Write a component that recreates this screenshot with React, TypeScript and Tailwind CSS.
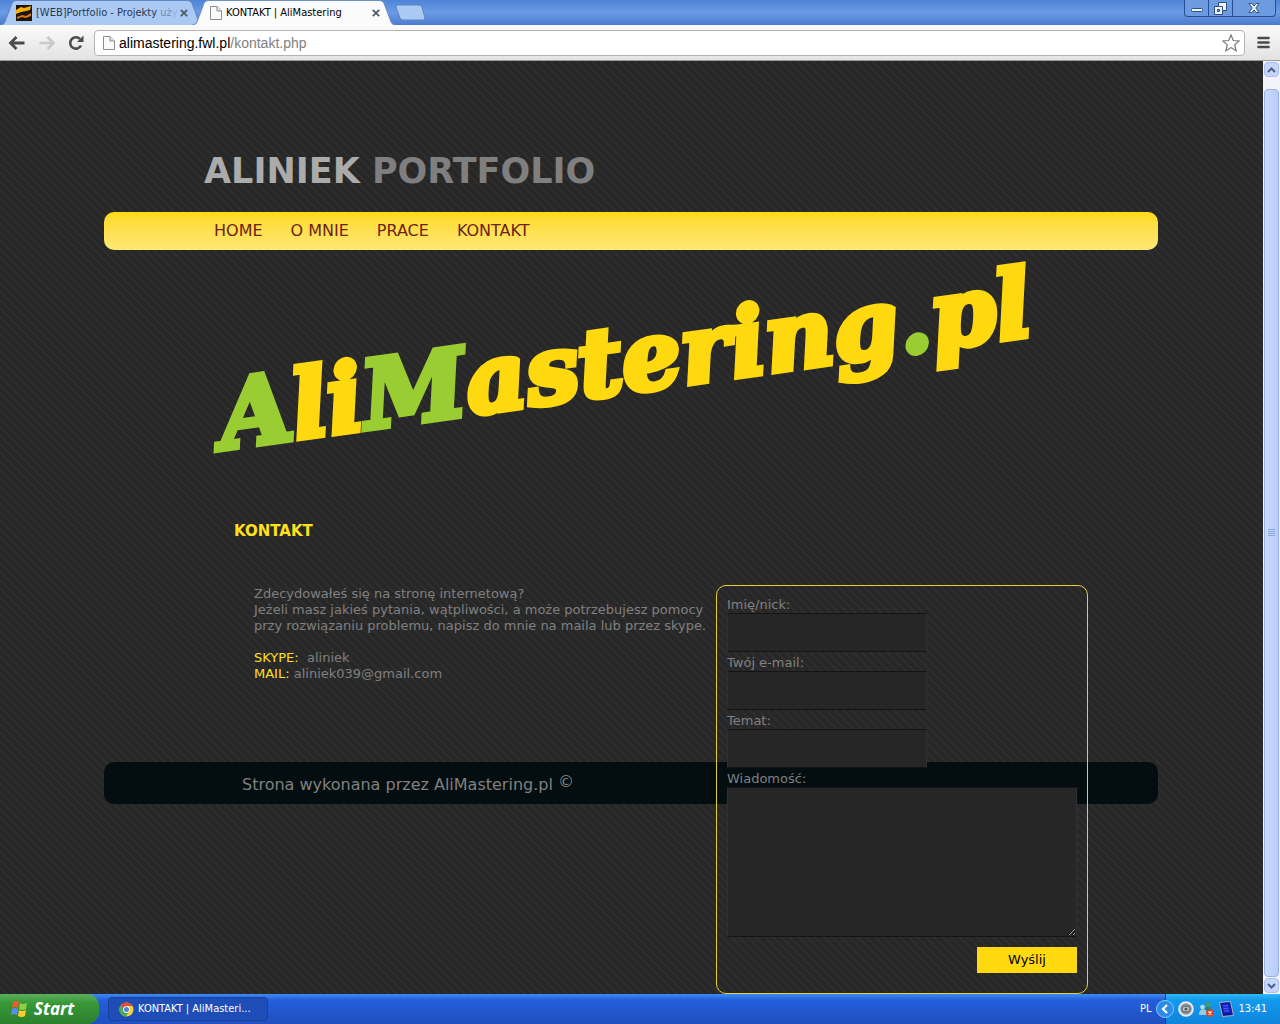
import type { ReactNode } from 'react';

const NAV_ITEMS = [
  { label: 'HOME', href: '#home' },
  { label: 'O MNIE', href: '#o-mnie' },
  { label: 'PRACE', href: '#prace' },
  { label: 'KONTAKT', href: '#kontakt' },
];

const FIELDS = [
  { id: 'nick', label: 'Imię/nick:', type: 'text' },
  { id: 'email', label: 'Twój e-mail:', type: 'email' },
  { id: 'subject', label: 'Temat:', type: 'text' },
];

function PageIcon({ className }: { className: string }) {
  return (
    <svg viewBox="0 0 12 14" className={className} fill="#fafafa" stroke="#8d8d8d">
      <path d="M.5.5h6.5l4.5 4.5v8.5H.5z" />
      <path d="M7 .5V5h4.5" fill="#e4e4e4" />
    </svg>
  );
}

function CloseIcon() {
  return (
    <svg viewBox="0 0 8 8" className="h-2 w-2" stroke="#505a68" strokeWidth="1.8">
      <path d="M.8.8l6.4 6.4M7.2.8L.8 7.2" />
    </svg>
  );
}

// Zakładka przeglądarki
function Tab({ active, width, children }: { active?: boolean; width: string; children: ReactNode }) {
  return (
    <div className={`relative -mr-3 h-[25px] ${width} ${active ? 'z-10' : ''}`}>
      <svg viewBox="0 0 200 24" preserveAspectRatio="none" className="absolute inset-0 h-full w-full">
        <path
          d="M0 24C4 24 5 21 6 18L11 5C12 2 13 .5 17 .5H183C187 .5 188 2 189 5L194 18C195 21 196 24 200 24"
          fill={active ? '#fbfbfb' : '#abcaf3'}
          stroke={active ? '#6d8fc6' : '#5f88c8'}
          strokeWidth="1"
        />
      </svg>
      <div className="relative flex h-full items-center px-4 pt-px text-[11px]">{children}</div>
    </div>
  );
}

function BrowserBar() {
  return (
    <header className="shrink-0 font-['DejaVu_Sans_Condensed','Noto_Sans',sans-serif]">
      <div className="flex h-[25px] items-start bg-gradient-to-b from-[#4e84d8] via-[#6b9be3] to-[#4a7bd0]">
        <Tab width="w-[204px]">
          <svg viewBox="0 0 16 16" className="mr-1 h-4 w-4 shrink-0">
            <rect width="16" height="16" fill="#211405" />
            <path d="M0 5L5 2l3 1 7-2-1 4-4 1-5 1-5 2z" fill="#f3b20c" />
            <path d="M1 12l5-2 4 1 5-3v3l-5 2-4-1-5 2z" fill="#d87a0a" />
          </svg>
          <span className="flex-1 whitespace-nowrap text-[#26384f]">
            [WEB]Portfolio - Projekty <span className="text-[#6f8db5]">uż</span>
            <span className="text-[#93b1dc]">y</span>
          </span>
          <button type="button" aria-label="Zamknij kartę">
            <CloseIcon />
          </button>
        </Tab>
        <Tab active width="w-[204px]">
          <PageIcon className="mr-1 ml-[2px] h-[14px] w-3 shrink-0" />
          <span className="flex-1 whitespace-nowrap text-black">KONTAKT | AliMastering</span>
          <button type="button" aria-label="Zamknij kartę">
            <CloseIcon />
          </button>
        </Tab>
        <button type="button" aria-label="Nowa karta" className="mt-1 ml-[10px]">
          <svg viewBox="0 0 32 18" className="h-[18px] w-8">
            <path d="M4 1h21q2 0 3 2l3 11q0 2-2 2H9q-2 0-3-2L2 3q0-2 2-2z" fill="#abcaf3" stroke="#5a84c8" />
          </svg>
        </button>
        <div className="flex-1" />
        <div className="mr-1 flex h-[17px] overflow-hidden rounded-b border border-t-0 border-[#2a4d8f] bg-[#6c9be2]">
          <button type="button" aria-label="Minimalizuj" className="flex w-6 items-center justify-center border-r border-[#2a4d8f]">
            <svg viewBox="0 0 12 4" className="mt-1 h-1 w-3">
              <rect x=".5" y=".5" width="11" height="3" rx="1" fill="#eef4ff" stroke="#33507f" />
            </svg>
          </button>
          <button type="button" aria-label="Przywróć" className="flex w-6 items-center justify-center border-r border-[#2a4d8f]">
            <svg viewBox="0 0 13 13" className="h-[13px] w-[13px]" fill="#eef4ff" stroke="#33507f">
              <path d="M4.500.5h8v8h-8z" />
              <path d="M.5 4.500h8v8h-8z" />
              <path d="M3.500 7.500h2v2h-2z" fill="#6c9be2" />
            </svg>
          </button>
          <button type="button" aria-label="Zamknij" className="flex w-[42px] items-center justify-center">
            <svg viewBox="0 0 12 10" className="h-[10px] w-3" fill="#eef4ff" stroke="#33507f">
              <path d="M1 .5h3l2 2.500 2-2.500h3L7.800 5 11 9.500H8L6 7 4 9.500H1L4.200 5z" />
            </svg>
          </button>
        </div>
      </div>

      <div className="flex h-9 items-center border-b border-[#9a9a9a] bg-gradient-to-b from-[#fbfbfb] to-[#e2e2e2] px-2">
        <button type="button" aria-label="Wstecz" className="mr-3">
          <svg viewBox="0 0 18 16" className="h-4 w-[18px]" fill="none" stroke="#4b4b4b" strokeWidth="2.800">
            <path d="M16.500 8H3M8.500 2L2.500 8l6 6" />
          </svg>
        </button>
        <button type="button" aria-label="Dalej" className="mr-3">
          <svg viewBox="0 0 18 16" className="h-4 w-[18px]" fill="none" stroke="#c9c9c9" strokeWidth="2.500">
            <path d="M1.500 8H15M9.500 2l6 6-6 6" />
          </svg>
        </button>
        <button type="button" aria-label="Odśwież" className="mr-[10px]">
          <svg viewBox="0 0 16 16" className="h-4 w-4">
            <path d="M13 10.500A5.700 5.700 0 1 1 12 4" fill="none" stroke="#4b4b4b" strokeWidth="2.600" />
            <path d="M15.500.5V7H9z" fill="#4b4b4b" />
          </svg>
        </button>
        <div className="flex h-[26px] flex-1 items-center rounded-sm border border-[#b4b4b4] bg-white pr-1 pl-2">
          <PageIcon className="mr-1 h-[14px] w-3 shrink-0" />
          <a href="#kontakt" className="flex-1 font-['Liberation_Sans',Arial,sans-serif] text-sm text-black">
            alimastering.fwl.pl<span className="text-[#808080]">/kontakt.php</span>
          </a>
          <button type="button" aria-label="Dodaj do zakładek">
            <svg viewBox="0 0 18 18" className="h-[18px] w-[18px]" fill="#fff" stroke="#777" strokeWidth="1.200">
              <path d="M9 1l2.300 5.500 5.900.5-4.500 3.900 1.400 5.800L9 13.600l-5.100 3.100 1.400-5.800L.8 7l5.900-.5z" />
            </svg>
          </button>
        </div>
        <button type="button" aria-label="Menu" className="mr-[2px] ml-3">
          <svg viewBox="0 0 13 13" className="h-[13px] w-[13px]" stroke="#4b4b4b" strokeWidth="2.600" strokeLinecap="round">
            <path d="M1.500 2h10M1.500 6.500h10M1.500 11h10" />
          </svg>
        </button>
      </div>
    </header>
  );
}

function Scrollbar() {
  const arrow = 'flex h-[15px] w-[15px] items-center justify-center rounded-sm border border-[#a9bff0] bg-[#c5d5fb]';
  return (
    <div className="flex w-[17px] shrink-0 flex-col items-center bg-[#f3f4fb] py-px">
      <button type="button" aria-label="Przewiń w górę" className={arrow}>
        <svg viewBox="0 0 9 6" className="h-[6px] w-[9px]" fill="none" stroke="#4d6185" strokeWidth="2">
          <path d="M1 5l3.500-3.500L8 5" />
        </svg>
      </button>
      <div className="mt-3 flex w-[15px] flex-1 items-center justify-center rounded-sm border border-[#98b1e8] bg-gradient-to-r from-[#cbdafd] to-[#b8cbf9]">
        <svg viewBox="0 0 7 8" className="h-2 w-[7px]" stroke="#8ba5e0">
          <path d="M0 .5h7M0 2.500h7M0 4.500h7M0 6.500h7" />
        </svg>
      </div>
      <button type="button" aria-label="Przewiń w dół" className={`mt-px ${arrow}`}>
        <svg viewBox="0 0 9 6" className="h-[6px] w-[9px]" fill="none" stroke="#4d6185" strokeWidth="2">
          <path d="M1 1l3.500 3.500L8 1" />
        </svg>
      </button>
    </div>
  );
}

function Banner() {
  return (
    <svg viewBox="0 0 860 220" className="mt-2 ml-[100px] h-[220px] w-[860px] max-w-full overflow-visible" role="img" aria-label="AliMastering.pl">
      <text
        x="20"
        y="191"
        transform="rotate(-8 20 191)"
        className="font-['DejaVu_Serif',serif] text-[94px] font-bold italic"
        fill="#ffd90f"
        stroke="#ffd90f"
        strokeWidth="6"
      >
        <tspan fill="#9acd32" stroke="#9acd32">A</tspan>li<tspan fill="#9acd32" stroke="#9acd32">M</tspan>astering<tspan fill="#9acd32" stroke="#9acd32">.</tspan>pl
      </text>
    </svg>
  );
}

function ContactForm() {
  const inputStyle = 'block border border-[#303030] border-y-[#141414] bg-[#262626] px-2 text-[#888] outline-none';
  return (
    <form
      className="relative -mb-[232px] w-[372px] shrink-0 rounded-[10px] border border-[#e5d033] px-[10px] pt-2 pb-5"
      onSubmit={(e) => e.preventDefault()}
    >
      {FIELDS.map((field) => (
        <div key={field.id}>
          <label htmlFor={field.id} className="block h-[19px] leading-[22px]">
            {field.label}
          </label>
          <input id={field.id} type={field.type} className={`h-[39px] w-[200px] ${inputStyle}`} />
        </div>
      ))}
      <label htmlFor="message" className="block h-[19px] leading-[22px]">
        Wiadomość:
      </label>
      <textarea id="message" className={`h-[150px] w-full resize ${inputStyle}`} />
      <button type="submit" className="mt-[10px] ml-auto block h-[26px] w-[100px] bg-[#ffd90f] text-black">
        Wyślij
      </button>
    </form>
  );
}

function Site() {
  return (
    <div className="min-w-0 flex-1 bg-[#292929] bg-[repeating-linear-gradient(45deg,#272727_0px,#272727_3px,#2f2f2f_5px,#2b2b2b_6px)] font-['DejaVu_Sans',Verdana,sans-serif] text-[13px] text-[#808080]">
      <div className="mx-auto max-w-[1055px] pr-px">
        <h1 className="pt-[86px] pl-[100px] text-[35px] leading-[48px] font-bold text-[#ababab]">
          ALINIEK <span className="text-[#7f7f7f]">PORTFOLIO</span>
        </h1>

        <nav className="mt-[17px] flex h-[38px] items-center gap-7 rounded-[10px] bg-gradient-to-b from-[#ffd90f] to-[#ffe873] pl-[110px] text-base text-[#6b2412]">
          {NAV_ITEMS.map((item) => (
            <a key={item.label} href={item.href}>
              {item.label}
            </a>
          ))}
        </nav>

        <Banner />

        <h2 className="mt-[43px] ml-[130px] text-[15px] leading-5 font-bold text-[#ffe01b]">KONTAKT</h2>

        <div className="mt-11 mr-[70px] ml-[150px] flex items-start justify-between">
          <div className="w-[462px] pt-px pb-[79px] leading-4">
            <p>Zdecydowałeś się na stronę internetową?</p>
            <p>Jeżeli masz jakieś pytania, wątpliwości, a może potrzebujesz pomocy przy rozwiązaniu problemu, napisz do mnie na maila lub przez skype.</p>
            <p className="mt-4">
              <span className="text-[#ffe01b]">SKYPE:</span>&nbsp; aliniek
            </p>
            <p>
              <span className="text-[#ffe01b]">MAIL:</span> aliniek039@gmail.com
            </p>
          </div>
          <ContactForm />
        </div>

        <footer className="flex h-[42px] items-center rounded-[10px] bg-[#040e10] pt-px pl-[138px] text-base">
          <p>
            Strona wykonana przez AliMastering.pl <span className="align-[3px]">©</span>
          </p>
        </footer>
      </div>
    </div>
  );
}

function Taskbar() {
  return (
    <footer className="relative z-10 flex h-[30px] shrink-0 items-center bg-gradient-to-b from-[#3f8cf3] via-[#245edb] via-20% to-[#1f4fc0] font-['DejaVu_Sans_Condensed','Noto_Sans',sans-serif] text-[11px] text-white">
      <button
        type="button"
        className="flex h-full w-[99px] items-center gap-1 rounded-r-xl bg-gradient-to-b from-[#5cb05c] via-[#389838] via-30% to-[#2c7f2c] pl-[10px] font-['Open_Sans',sans-serif] text-[17px] font-bold italic"
      >
        <svg viewBox="0 0 20 18" className="h-[18px] w-5">
          <path d="M3 2q3-2 6 0L8 8Q5 6 2 8z" fill="#ee5a2a" />
          <path d="M10 3q3 2 7 0l-1 6q-3 2-7 0z" fill="#8fd13f" />
          <path d="M2 9q3-2 6 0l-1 6q-3-2-6 0z" fill="#5b8df0" />
          <path d="M9 10q3 2 7 0l-1 6q-3 2-7 0z" fill="#fbd02e" />
        </svg>
        Start
      </button>
      <button type="button" className="ml-[9px] flex h-6 w-[160px] items-center gap-1 rounded-sm border border-[#1a419c] bg-[#1e4db7] pl-[10px]">
        <svg viewBox="0 0 16 16" className="h-[15px] w-[15px]">
          <circle cx="8" cy="8" r="7.500" fill="#f7cf3c" />
          <path d="M8 8L1.500 4.200A7.500 7.500 0 0 1 14.500 4.300H8z" fill="#dd4b39" />
          <path d="M1.500 4.200A7.500 7.500 0 0 0 7.500 15.500L11 9.500 8 8z" fill="#4aa84e" />
          <circle cx="8" cy="8" r="3.600" fill="#fff" />
          <circle cx="8" cy="8" r="2.700" fill="#4a86d8" />
        </svg>
        KONTAKT | AliMasteri...
      </button>
      <div className="flex-1" />
      <span className="mr-[14px]">PL</span>
      <div className="flex h-full items-center gap-1 border-l border-[#0b3f9a] bg-gradient-to-b from-[#2fb8f6] via-[#129aee] via-20% to-[#0f84dc] pr-[13px]">
        <button type="button" aria-label="Pokaż ukryte ikony" className="-ml-[10px]">
          <svg viewBox="0 0 18 18" className="h-[18px] w-[18px]">
            <circle cx="9" cy="9" r="8.500" fill="#2b8be8" stroke="#8cc8fa" />
            <path d="M11 5L7 9l4 4" fill="none" stroke="#fff" strokeWidth="2.200" />
          </svg>
        </button>
        <svg viewBox="0 0 16 16" className="h-4 w-4">
          <circle cx="8" cy="8" r="6.800" fill="#8a949c" stroke="#e8ecef" strokeWidth="2" />
          <ellipse cx="8" cy="8" rx="4" ry="3" fill="#c4ccd2" stroke="#56616a" />
          <circle cx="8" cy="8" r="1.600" fill="#4c565e" />
        </svg>
        <svg viewBox="0 0 16 16" className="h-4 w-4">
          <circle cx="10" cy="3.500" r="3" fill="#3c9a80" />
          <path d="M6 12q0-6 4-6t5 6z" fill="#2c7f78" />
          <circle cx="4.500" cy="6" r="2.300" fill="#b4dcec" />
          <path d="M1 14q0-6 4-6t4 6z" fill="#9cc8dc" />
          <circle cx="12" cy="12" r="3.800" fill="#e0401f" />
          <path d="M10.500 10.500l3 3M13.500 10.500l-3 3" stroke="#fff" strokeWidth="1.300" />
        </svg>
        <svg viewBox="0 0 16 16" className="h-4 w-4">
          <path d="M1.500 1.500l11-1 3 14-11 1z" fill="#0d1890" stroke="#a8b4c4" />
          <path d="M3.500 3l8-.5 2 9.500-8 .5z" fill="#1323c9" />
          <path d="M5 5l5-.3M5.500 7.500l5-.3M6 10l5-.3" stroke="#5c70f0" />
        </svg>
        <time>13:41</time>
      </div>
    </footer>
  );
}

export default function App() {
  return (
    <div className="flex h-screen flex-col overflow-hidden bg-[#292929]">
      <BrowserBar />
      <main className="flex min-h-0 flex-1 overflow-hidden">
        <Site />
        <Scrollbar />
      </main>
      <Taskbar />
    </div>
  );
}
